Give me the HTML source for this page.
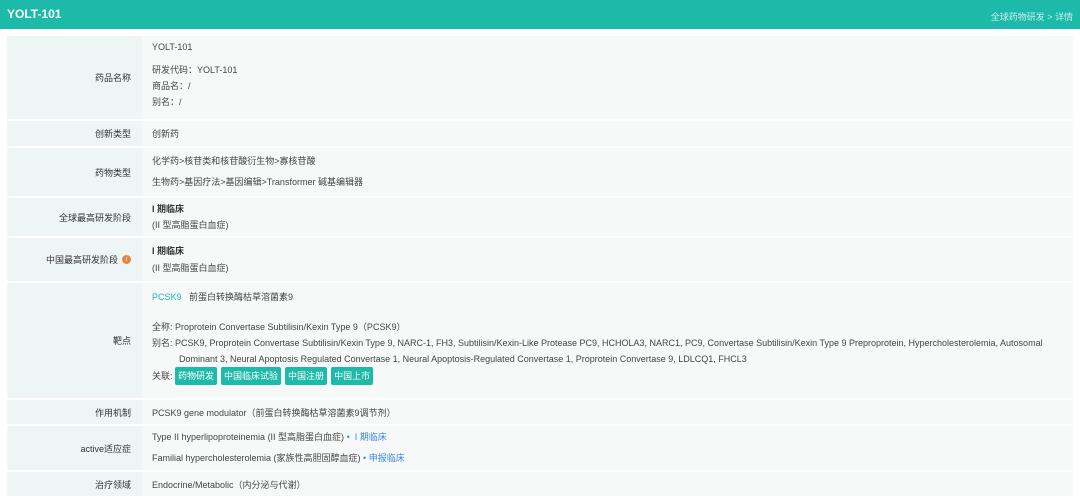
<!DOCTYPE html>
<html><head><meta charset="utf-8"><style>
*{margin:0;padding:0;box-sizing:border-box}
body{width:1080px;height:494px;overflow:hidden;background:#fff;font-family:"Liberation Sans","Noto Sans CJK SC",sans-serif;font-size:9px;color:#444}
.hd{height:29px;background:#1dbaa9;position:relative}
.hd .t{position:absolute;left:7px;top:7px;color:#fff;font-weight:bold;font-size:12px}
.hd .r{position:absolute;right:7px;top:10px;color:#c8efe9;font-size:9px}
.tb{position:absolute;left:7px;top:36px;width:1066px}
.row{display:flex;border-bottom:2px solid #fff}
.lb{width:135px;background:#edf5f5;display:flex;align-items:center;justify-content:flex-end;padding-right:11px;color:#333}
.vl{flex:1;background:#f7f9f9;padding-left:10px;display:flex;flex-direction:column;justify-content:center}
.tag{display:inline-block;background:#1dbaa9;color:#fff;padding:1px 3px;border-radius:2px;margin-right:4px}
.blue{color:#3a86e0}
.b{font-weight:bold;color:#333}
</style></head><body>
<div class="hd"><div class="t">YOLT-101</div><div class="r">全球药物研发 &gt; 详情</div></div>
<div class="tb">
<div class="row" style="height:85px"><div class="lb">药品名称</div><div class="vl" style="justify-content:flex-start;padding-top:6px;line-height:11px"><div>YOLT-101</div><div style="height:12px"></div><div>研发代码：YOLT-101</div><div style="margin-top:5px">商品名：/</div><div style="margin-top:5px">别名：/</div></div></div>
<div class="row" style="height:27px"><div class="lb">创新类型</div><div class="vl">创新药</div></div>
<div class="row" style="height:50px"><div class="lb">药物类型</div><div class="vl" style="line-height:21px">化学药&gt;核苷类和核苷酸衍生物&gt;寡核苷酸<br>生物药&gt;基因疗法&gt;基因编辑&gt;Transformer 碱基编辑器</div></div>
<div class="row" style="height:40px"><div class="lb">全球最高研发阶段</div><div class="vl" style="line-height:16px"><div class="b">I 期临床</div><div>(II 型高脂蛋白血症)</div></div></div>
<div class="row" style="height:45px"><div class="lb">中国最高研发阶段 <span style="display:inline-block;width:9px;height:9px;border-radius:50%;background:#e8833a;color:#fff;font-size:7px;text-align:center;line-height:9px;margin-left:4px;font-style:italic">i</span></div><div class="vl" style="line-height:17px"><div class="b">I 期临床</div><div>(II 型高脂蛋白血症)</div></div></div>
<div class="row" style="height:117px"><div class="lb">靶点</div><div class="vl" style="justify-content:flex-start;padding-top:6px;line-height:16px"><div><span style="color:#1dbaa9">PCSK9</span>&nbsp;&nbsp; 前蛋白转换酶枯草溶菌素9</div><div style="height:14px"></div><div>全称: Proprotein Convertase Subtilisin/Kexin Type 9（PCSK9）</div><div>别名: PCSK9, Proprotein Convertase Subtilisin/Kexin Type 9, NARC-1, FH3, Subtilisin/Kexin-Like Protease PC9, HCHOLA3, NARC1, PC9, Convertase Subtilisin/Kexin Type 9 Preproprotein, Hypercholesterolemia, Autosomal</div><div style="padding-left:27px">Dominant 3, Neural Apoptosis Regulated Convertase 1, Neural Apoptosis-Regulated Convertase 1, Proprotein Convertase 9, LDLCQ1, FHCL3</div><div>关联: <span class="tag">药物研发</span><span class="tag">中国临床试验</span><span class="tag">中国注册</span><span class="tag">中国上市</span></div></div></div>
<div class="row" style="height:26px"><div class="lb">作用机制</div><div class="vl">PCSK9 gene modulator（前蛋白转换酶枯草溶菌素9调节剂）</div></div>
<div class="row" style="height:46px"><div class="lb">active适应症</div><div class="vl" style="line-height:21px"><div>Type II hyperlipoproteinemia (II 型高脂蛋白血症) <span class="blue">•&nbsp; I 期临床</span></div><div>Familial hypercholesterolemia (家族性高胆固醇血症) <span class="blue">• 申报临床</span></div></div></div>
<div class="row" style="height:26px"><div class="lb">治疗领域</div><div class="vl">Endocrine/Metabolic（内分泌与代谢）</div></div>
</div>
</body></html>
